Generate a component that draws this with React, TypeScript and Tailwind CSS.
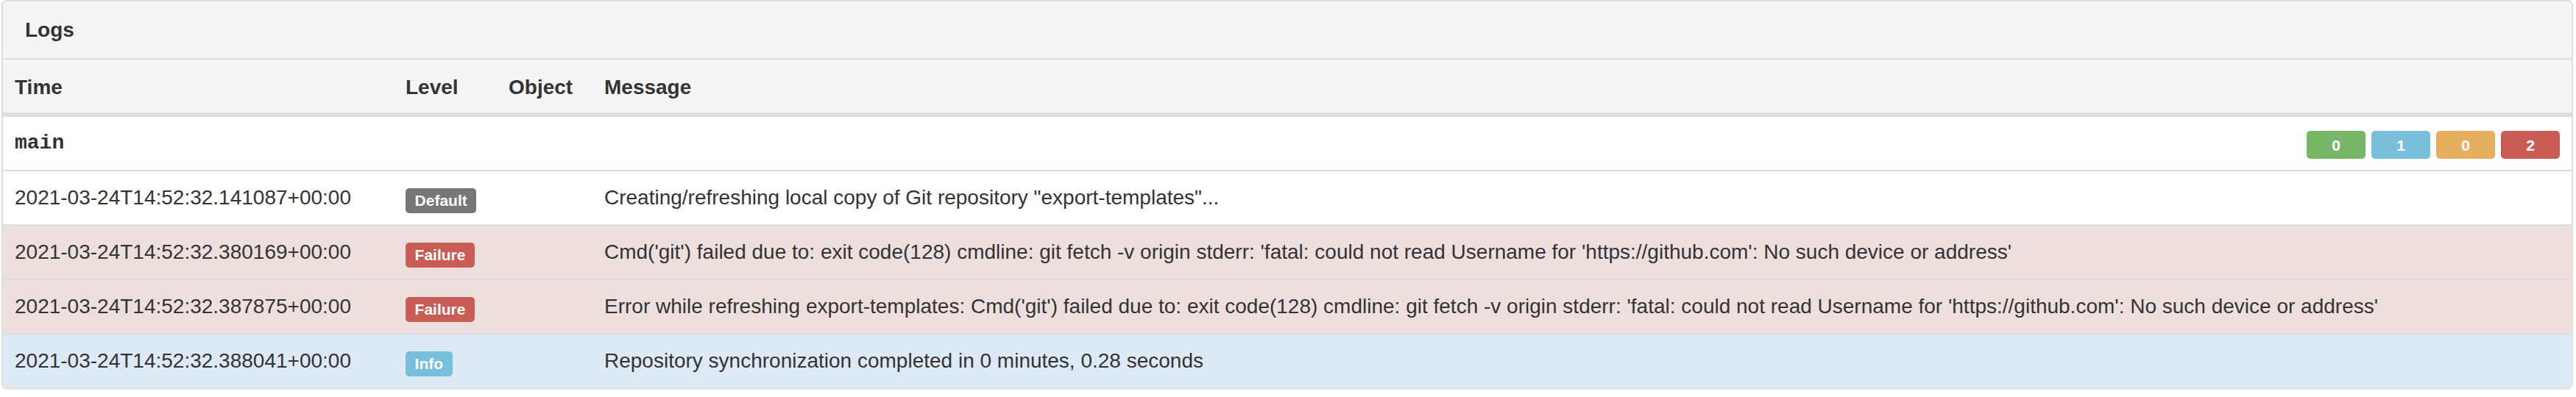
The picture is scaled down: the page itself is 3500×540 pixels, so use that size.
import React from 'react';

type Row = {
  time: string;
  level: string;
  message: string;
  rowClass: string;
  badgeClass: string;
};

const rows: Row[] = [
  {
    time: '2021-03-24T14:52:32.141087+00:00',
    level: 'Default',
    message: 'Creating/refreshing local copy of Git repository "export-templates"...',
    rowClass: 'bg-white',
    badgeClass: 'bg-[#777777]',
  },
  {
    time: '2021-03-24T14:52:32.380169+00:00',
    level: 'Failure',
    message:
      "Cmd('git') failed due to: exit code(128) cmdline: git fetch -v origin stderr: 'fatal: could not read Username for 'https://github.com': No such device or address'",
    rowClass: 'bg-[#eedfdf]',
    badgeClass: 'bg-[#c95d56]',
  },
  {
    time: '2021-03-24T14:52:32.387875+00:00',
    level: 'Failure',
    message:
      "Error while refreshing export-templates: Cmd('git') failed due to: exit code(128) cmdline: git fetch -v origin stderr: 'fatal: could not read Username for 'https://github.com': No such device or address'",
    rowClass: 'bg-[#eedfdf]',
    badgeClass: 'bg-[#c95d56]',
  },
  {
    time: '2021-03-24T14:52:32.388041+00:00',
    level: 'Info',
    message: 'Repository synchronization completed in 0 minutes, 0.28 seconds',
    rowClass: 'bg-[#ddeaf5]',
    badgeClass: 'bg-[#77bfdb]',
  },
];

const counts = [
  { value: 0, className: 'bg-[#77b767]' },
  { value: 1, className: 'bg-[#77bfdb]' },
  { value: 0, className: 'bg-[#e6af5f]' },
  { value: 2, className: 'bg-[#c95d56]' },
];

function Label({ text, className }: { text: string; className: string }) {
  return (
    <span
      className={`mt-[8px] inline-flex h-[34px] items-center rounded-[5px] px-[12.6px] pb-[1px] text-[21px] font-bold leading-none text-white ${className}`}
    >
      {text}
    </span>
  );
}

function LogRow({ row }: { row: Row }) {
  return (
    <div className={`flex h-[74px] items-center border-t-2 border-[#dddddd] ${row.rowClass}`}>
      <div className="w-[531px] shrink-0 px-[16px]">{row.time}</div>
      <div className="flex w-[140px] shrink-0 px-[16px]">
        <Label text={row.level} className={row.badgeClass} />
      </div>
      <div className="w-[130px] shrink-0 px-[16px]" />
      <div className="flex-1 whitespace-nowrap px-[16px]">{row.message}</div>
    </div>
  );
}

export default function App() {
  return (
    <div className="min-h-[540px] bg-white pl-[2px] font-['Liberation_Sans','Helvetica_Neue',Arial,sans-serif] text-[28px] leading-[40px] text-[#333333]">
      <div className="w-[3494px] overflow-hidden rounded-[8px] border-2 border-[#dddddd] bg-white shadow-[0_2px_2px_rgba(0,0,0,0.05)]">
        {/* Panel heading */}
        <div className="flex h-[79px] items-center border-b-2 border-[#dddddd] bg-[#f5f5f5] px-[30px] font-bold">
          Logs
        </div>

        {/* Column headers */}
        <div className="flex h-[76px] items-center border-b-4 border-[#dddddd] bg-[#f5f5f5] pt-[3px] font-bold">
          <div className="w-[531px] shrink-0 px-[16px]">Time</div>
          <div className="w-[140px] shrink-0 px-[16px]">Level</div>
          <div className="w-[130px] shrink-0 px-[16px]">Object</div>
          <div className="flex-1 px-[16px]">Message</div>
        </div>

        {/* Group row */}
        <div className="flex h-[74px] items-center justify-between border-t-2 border-[#dddddd] bg-white px-[16px]">
          <span className="font-['Liberation_Mono','Courier_New',monospace] font-bold">main</span>
          <div className="mt-[4px] flex gap-[8px]">
            {counts.map((c, i) => (
              <span
                key={i}
                className={`flex h-[38px] w-[80px] items-center justify-center rounded-[5px] text-[21px] font-bold leading-none text-white ${c.className}`}
              >
                {c.value}
              </span>
            ))}
          </div>
        </div>

        {rows.map((row) => (
          <LogRow key={row.time} row={row} />
        ))}
      </div>
    </div>
  );
}
